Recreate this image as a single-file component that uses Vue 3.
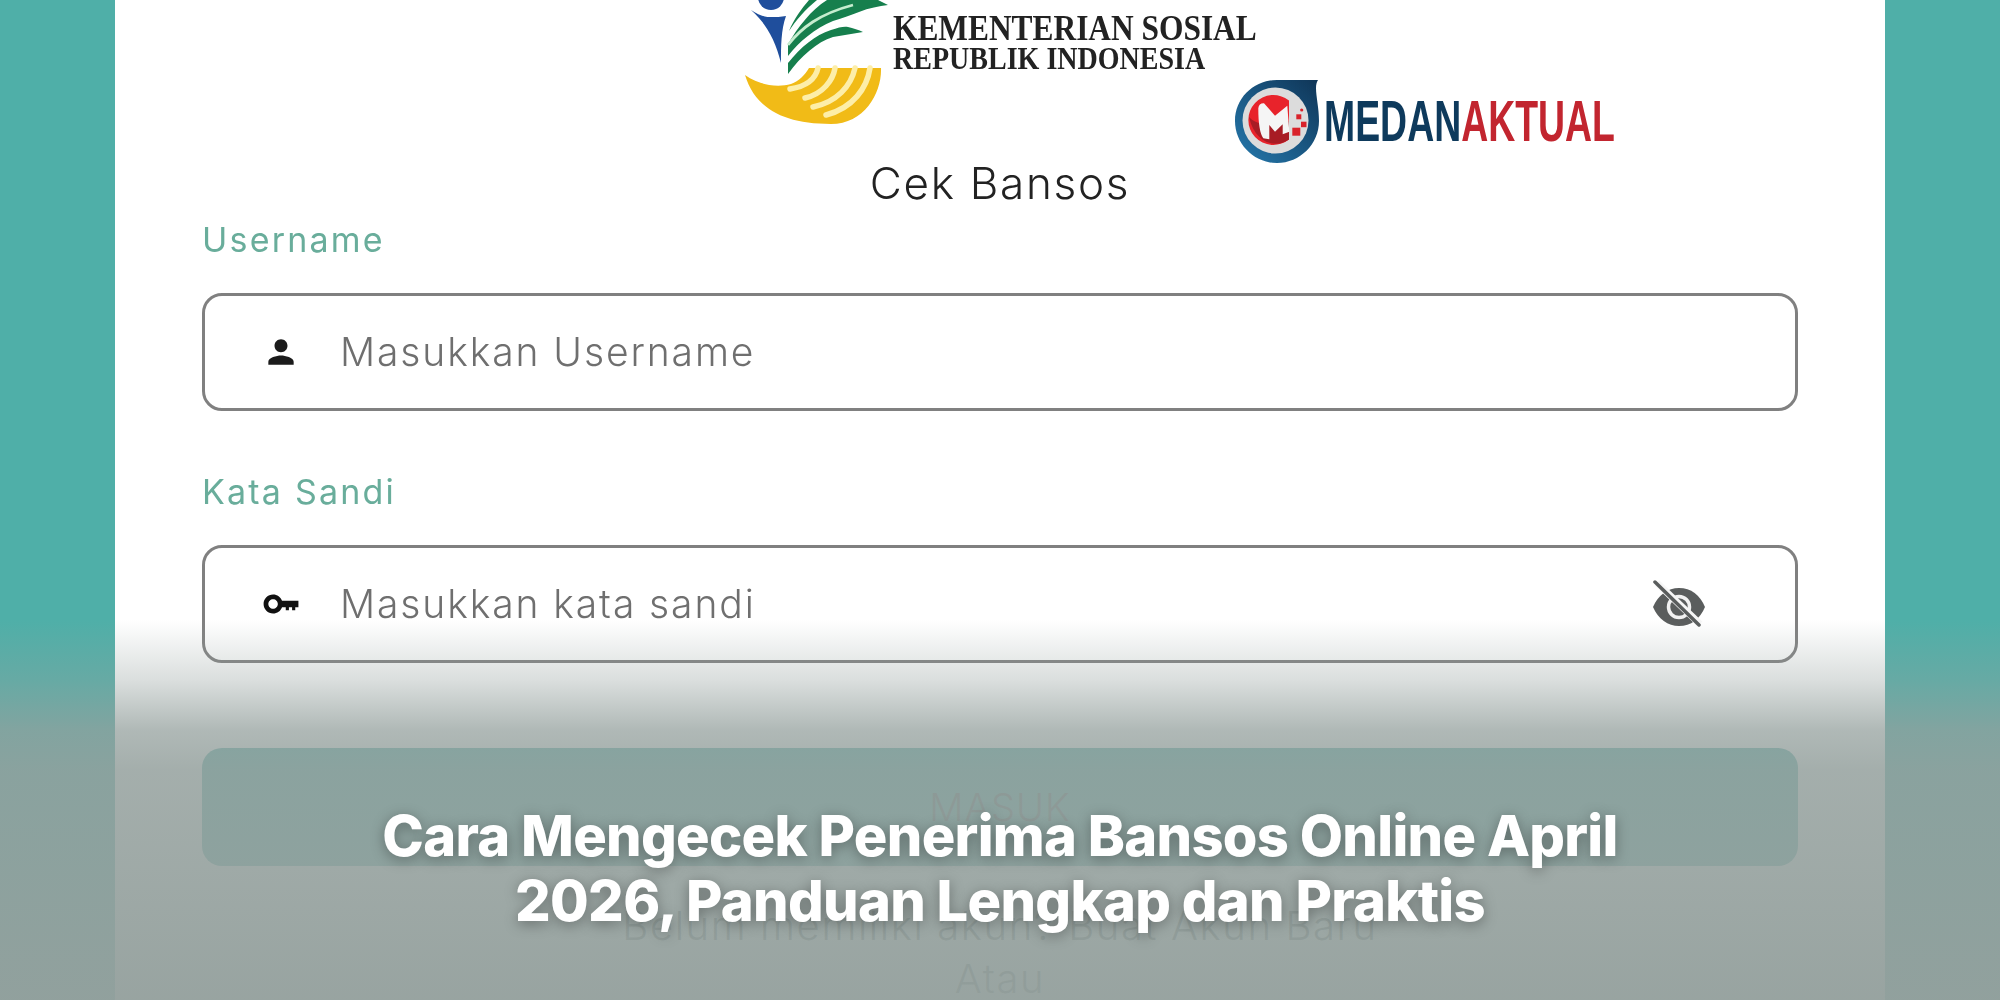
<script setup>
const fields = [
  { id: 'user', label: 'Username', placeholder: 'Masukkan Username' },
  { id: 'pass', label: 'Kata Sandi', placeholder: 'Masukkan kata sandi' },
]
</script>

<template>
  <div class="stage">
    <main class="card">
      <header class="brand">
        <svg class="emblem" width="150" height="125" viewBox="0 0 150 125">
          <circle cx="28" cy="-3" r="13" fill="#1f4e9c" />
          <path d="M8 10C14 14 20 17 27 17C33 17 38 17 43 16C38 30 38 46 38 63C33 42 24 24 8 10Z" fill="#1f4e9c" />
          <path d="M46 31C51 19 59 8 66 0L74 0C63 9 53 20 46 31Z" fill="#167f4d" />
          <path d="M45 44C55 27 68 10 84 0L135 0L145 5C136 6 126 8 116 12C108 15 100 18 90 21C72 28 56 42 45 56Z" fill="#167f4d" />
          <path d="M45 45C58 28 76 14 110 5" fill="none" stroke="#c6edcf" stroke-width="2.800" />
          <path d="M45 63C58 47 72 35 88 30C96 27 102 26 105 27C110 28 116 30 120 32C110 34 100 35 90 37C74 42 58 56 45 74Z" fill="#167f4d" />
          <path d="M2 75C16 85 34 88 48 84C56 81 62 75 66 68L138 68C139 92 122 124 88 124C40 124 12 108 2 75Z" fill="#f1bb17" />
          <g fill="none" stroke="#fdeea8" stroke-width="5.500" stroke-linecap="round">
            <path d="M75 68C73 77 66 86 47 89" />
            <path d="M92 68C90 80 80 94 62 98" />
            <path d="M112 68C108 86 94 102 70 107" />
            <path d="M127 68C124 88 110 108 83 115" />
          </g>
        </svg>
        <div class="ministry">
          <span class="ministry-top">KEMENTERIAN SOSIAL</span>
          <span class="ministry-bottom">REPUBLIK INDONESIA</span>
        </div>
      </header>

      <h1 class="title">Cek Bansos</h1>

      <section v-for="field in fields" :key="field.id" class="field">
        <label class="label">{{ field.label }}</label>
        <div class="input">
          <span class="input-icon">
            <svg v-if="field.id === 'user'" width="38" height="38" viewBox="0 0 24 24">
              <path fill="#1b1b1b" d="M12 12.200c2.300 0 4.100-1.800 4.100-4.100S14.300 4 12 4 7.900 5.800 7.900 8.100s1.800 4.100 4.100 4.100zm0 2c-2.700 0-8 1.300-8 4v1.800h16v-1.800c0-2.700-5.300-4-8-4z" />
            </svg>
            <svg v-else width="38" height="38" viewBox="0 0 24 24">
              <path fill="#111" d="M12.650 10C11.830 7.670 9.610 6 7 6c-3.310 0-6 2.690-6 6s2.690 6 6 6c2.610 0 4.830-1.670 5.650-4H15v2h2v-2h2v2h2v-2h2v-4H12.650zM7 15c-1.660 0-3-1.340-3-3s1.340-3 3-3 3 1.340 3 3-1.340 3-3 3z" />
            </svg>
          </span>
          <span class="placeholder">{{ field.placeholder }}</span>
          <svg v-if="field.id === 'pass'" class="eye" width="70" height="60" viewBox="0 0 70 60">
            <path d="M10 33C15 21 25 14 36 14C48 14 57 21 62 33C57 45 48 52 36 52C25 52 15 45 10 33Z" fill="#5a5d5d" />
            <circle cx="36" cy="33" r="10.500" fill="none" stroke="#f1f1f1" stroke-width="3.500" />
            <path d="M14 9L57 50" stroke="#f6f6f6" stroke-width="7" />
            <path d="M12 8L56 51" stroke="#5a5d5d" stroke-width="3.500" stroke-linecap="round" />
          </svg>
        </div>
      </section>

      <button class="submit" type="button">MASUK</button>
      <p class="ghost ghost-first">Belum memiliki akun? Buat Akun Baru</p>
      <p class="ghost">Atau</p>
    </main>

    <div class="fade"></div>

    <div class="watermark">
      <svg width="84" height="84" viewBox="0 0 84 84">
        <defs>
          <linearGradient id="drop" x1="0" y1="1" x2="1" y2="0">
            <stop offset="0" stop-color="#2579ad" />
            <stop offset="1" stop-color="#0f3557" />
          </linearGradient>
        </defs>
        <path d="M83 1C78 8 84 24 84 42C84 65 65 84 42 84C19 84 0 65 0 42C0 19 19 1 42 1Z" fill="url(#drop)" />
        <circle cx="40.500" cy="41.500" r="33" fill="#dcdcdc" />
        <path d="M54 21.500A25 25 0 1 0 54 60.500Z" fill="#e8232b" />
        <path d="M14 38C18 42 22 44 26 44L54 42V60.500C40 70 20 64 14 38Z" fill="#a81c24" />
        <path d="M23.300 29.300Q24 24 29 24.300L40 36.700L52.300 26.700L54.300 52.700L47.700 55.300V45.300L40 52.700L34.300 46V60.300L28.300 59.300Q23.300 52.700 23.300 29.300Z" fill="#f5f5f5" />
        <g fill="#d9222a">
          <rect x="57.300" y="48.700" width="8" height="8" />
          <rect x="66" y="42.700" width="5.500" height="5.500" />
          <rect x="61.300" y="35.300" width="5" height="5" />
          <circle cx="66.700" cy="31" r="1.600" />
        </g>
      </svg>
      <div class="wordmark"><span class="navy">MEDAN</span><span class="red">AKTUAL</span></div>
    </div>

    <h2 class="headline">Cara Mengecek Penerima Bansos Online April<br />2026, Panduan Lengkap dan Praktis</h2>
  </div>
</template>

<style scoped>
.stage {
  position: relative;
  width: 2000px;
  height: 1000px;
  padding: 0 115px;
  box-sizing: border-box;
  overflow: hidden;
  background: #4fafa8;
}
.card {
  height: 1000px;
  padding: 0 87px;
  background: #fff;
  overflow: hidden;
  font-family: Inter, "Noto Sans", sans-serif;
  font-weight: 300;
}
.brand {
  display: flex;
  justify-content: center;
  height: 125px;
  filter: blur(0.6px);
}
.ministry {
  display: flex;
  flex-direction: column;
  width: 364px;
  padding-top: 11px;
  font-family: "Liberation Serif", serif;
  font-weight: 700;
  color: #222;
  white-space: nowrap;
}
.ministry-top {
  font-size: 36px;
  line-height: 35px;
  transform: scaleX(0.872);
  transform-origin: left center;
}
.ministry-bottom {
  font-size: 31px;
  line-height: 25px;
  transform: scaleX(0.904);
  transform-origin: left center;
}
.title {
  margin: 33px 0 0;
  font-size: 44px;
  line-height: 50px;
  font-weight: 300;
  text-align: center;
  color: #222;
  letter-spacing: 1.7px;
  filter: blur(0.4px);
}
.field {
  display: flex;
  flex-direction: column;
}
.field + .field .label {
  margin-top: 61px;
}
.label {
  margin-top: 12px;
  font-size: 34px;
  font-weight: 400;
  line-height: 40px;
  color: #69ad9b;
  letter-spacing: 2.2px;
  filter: blur(0.4px);
}
.input {
  display: flex;
  align-items: center;
  height: 118px;
  margin-top: 33px;
  padding-left: 36px;
  padding-right: 82px;
  box-sizing: border-box;
  border: 3px solid #808080;
  border-radius: 20px;
  filter: blur(0.6px);
}
.input-icon {
  display: flex;
  justify-content: center;
  width: 80px;
}
.placeholder {
  flex: 1;
  margin-left: 19px;
  font-size: 39px;
  line-height: 50px;
  color: #6f6f6f;
  letter-spacing: 1.9px;
}
.eye {
  filter: blur(0.6px);
}
.submit {
  display: block;
  width: 100%;
  height: 118px;
  margin-top: 85px;
  padding: 0;
  border: 0;
  border-radius: 20px;
  background: #58b2ab;
  font-family: inherit;
  font-size: 38px;
  font-weight: 300;
  letter-spacing: 1px;
  color: #5f6f6e;
}
.ghost {
  margin: 3px 0 0;
  font-size: 40px;
  line-height: 50px;
  text-align: center;
  color: #5a6463;
  letter-spacing: 1.6px;
}
.ghost-first {
  margin-top: 35px;
}
.fade {
  position: absolute;
  inset: 0;
  background: linear-gradient(
    to bottom,
    rgba(148, 160, 157, 0) 620px,
    rgba(148, 160, 157, 0.34) 680px,
    rgba(148, 160, 157, 0.74) 730px,
    rgba(148, 160, 157, 0.85) 770px,
    rgba(148, 160, 157, 0.96) 1000px
  );
}
.watermark {
  position: absolute;
  left: 1235px;
  top: 79px;
  display: flex;
  align-items: center;
  gap: 5px;
  filter: blur(0.4px);
}
.wordmark {
  width: 420px;
  margin-right: -130px;
  font-family: "Liberation Sans", sans-serif;
  font-weight: 700;
  font-size: 58px;
  line-height: 82px;
  white-space: nowrap;
  transform: scaleX(0.645);
  transform-origin: left center;
}
.navy {
  color: #0e3a5c;
}
.red {
  color: #c2252f;
}
.headline {
  position: absolute;
  left: 0;
  right: 0;
  top: 804px;
  margin: 0;
  font-family: Inter, "Noto Sans", sans-serif;
  font-size: 56px;
  line-height: 65px;
  font-weight: 800;
  letter-spacing: -0.7px;
  text-align: center;
  color: #fff;
  text-shadow: 0 3px 14px rgba(0, 0, 0, 0.35);
}
</style>
